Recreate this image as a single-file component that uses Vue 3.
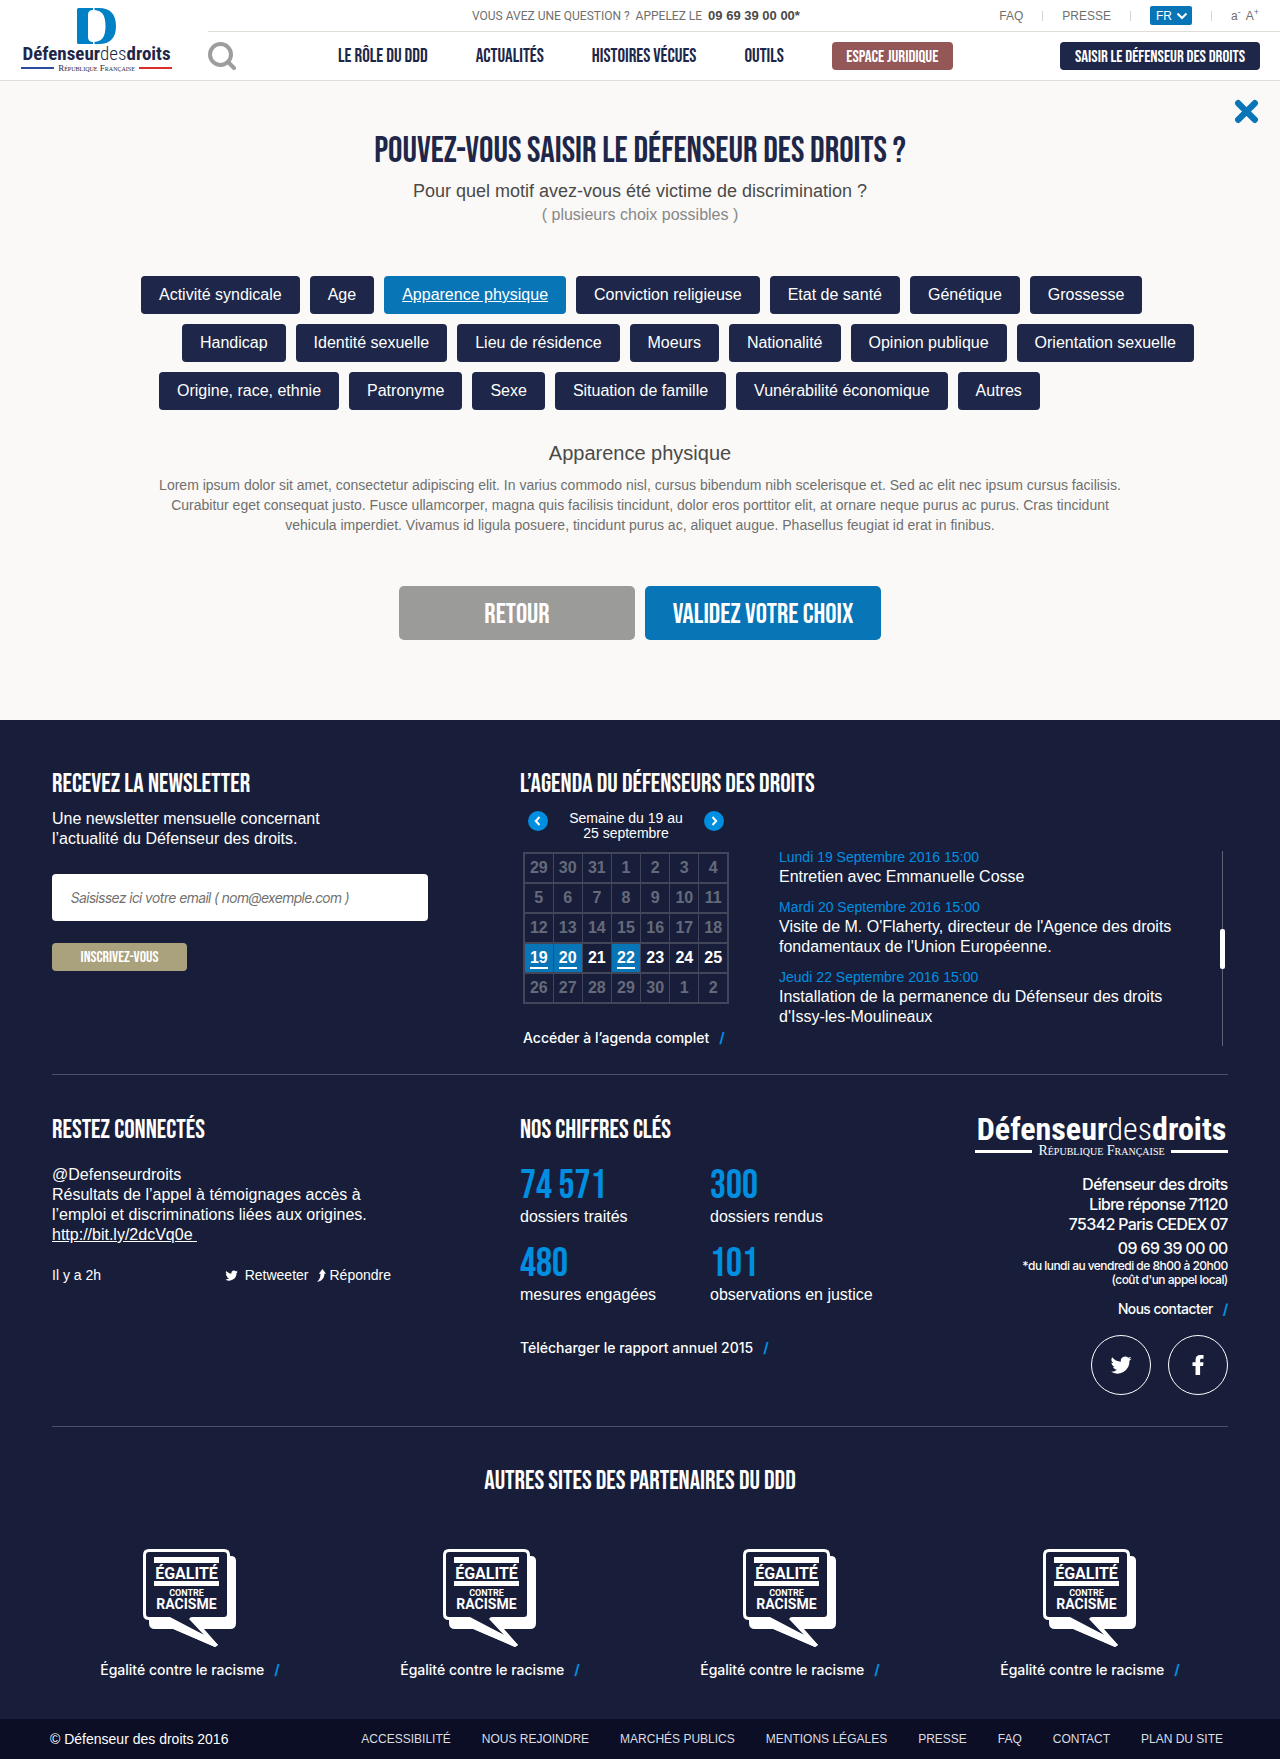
<script setup>
import { ref } from 'vue'

const menu = ['Le rôle du DDD', 'Actualités', 'Histoires vécues', 'Outils']

const reasonRows = [
  ['Activité syndicale', 'Age', 'Apparence physique', 'Conviction religieuse', 'Etat de santé', 'Génétique', 'Grossesse'],
  ['Handicap', 'Identité sexuelle', 'Lieu de résidence', 'Moeurs', 'Nationalité', 'Opinion publique', 'Orientation sexuelle'],
  ['Origine, race, ethnie', 'Patronyme', 'Sexe', 'Situation de famille', 'Vunérabilité économique', 'Autres'],
]
const selected = ref('Apparence physique')
const language = ref('FR')
const email = ref('')

const weeks = [
  [29, 30, 31, 1, 2, 3, 4],
  [5, 6, 7, 8, 9, 10, 11],
  [12, 13, 14, 15, 16, 17, 18],
  [19, 20, 21, 22, 23, 24, 25],
  [26, 27, 28, 29, 30, 1, 2],
]
const currentWeek = 3
const eventDays = [19, 20, 22]

const events = [
  { date: 'Lundi 19 Septembre 2016 15:00', lines: ['Entretien avec Emmanuelle Cosse'] },
  { date: 'Mardi 20 Septembre 2016 15:00', lines: ["Visite de M. O'Flaherty, directeur de l'Agence des droits", "fondamentaux de l'Union Européenne."] },
  { date: 'Jeudi 22 Septembre 2016 15:00', lines: ['Installation de la permanence du Défenseur des droits', "d'Issy-les-Moulineaux"] },
]

const figures = [
  { value: '74 571', label: 'dossiers traités' },
  { value: '300', label: 'dossiers rendus' },
  { value: '480', label: 'mesures engagées' },
  { value: '101', label: 'observations en justice' },
]

const legal = ['Accessibilité', 'Nous rejoindre', 'Marchés publics', 'Mentions légales', 'Presse', 'FAQ', 'Contact', 'Plan du site']

const bird = 'M23.6 4.9c-.8.4-1.7.6-2.7.8 1-.6 1.700-1.500 2-2.600-.9.500-1.900.900-3 1.100a4.700 4.700 0 0 0-8 4.300C8 8.300 4.600 6.400 2.300 3.600a4.700 4.700 0 0 0 1.400 6.200c-.7 0-1.500-.200-2.100-.600 0 2.300 1.600 4.200 3.800 4.700-.7.200-1.400.200-2.100.100.600 1.800 2.300 3.200 4.400 3.200A9.500 9.500 0 0 1 .700 19.200a13.300 13.300 0 0 0 20.500-11.800c.9-.7 1.700-1.500 2.400-2.500z'
</script>

<template>
  <div class="page">
    <header class="header">
      <a class="brand" href="#" aria-label="Défenseur des droits">
        <svg class="brand-mark" viewBox="0 0 39 36" aria-hidden="true">
          <path d="M0 1.500Q0 0 1.500 0H16V2Q11 2 11 7V29Q11 34 16 34V36H1.500Q0 36 0 34.500Z" />
          <path d="M17.500 0H22C33 0 39 6 39 18S33 36 22 36H17.500V34C25 33.500 28.500 29 28.500 18S25 2.500 17.500 2Z" />
        </svg>
        <span class="wordmark">Défenseur<i>des</i>droits</span>
        <span class="republic"><span>République Française</span></span>
      </a>

      <div class="header-body">
        <div class="topbar">
          <p class="question">VOUS AVEZ UNE QUESTION ?&nbsp; APPELEZ LE &nbsp;<b>09 69 39 00 00*</b></p>
          <div class="tools">
            <a href="#">FAQ</a>
            <a href="#">PRESSE</a>
            <div class="language">
              <select v-model="language" aria-label="Langue">
                <option>FR</option>
                <option>EN</option>
              </select>
              <svg viewBox="0 0 12 8" aria-hidden="true"><path d="M1.500 1.500 6 6l4.500-4.500" /></svg>
            </div>
            <div class="sizes">
              <button type="button" aria-label="Réduire le texte">a<sup>-</sup></button>
              <button type="button" aria-label="Agrandir le texte">A<sup>+</sup></button>
            </div>
          </div>
        </div>

        <div class="mainbar">
          <button class="search" type="button" aria-label="Rechercher">
            <svg viewBox="0 0 28 28"><circle cx="12.500" cy="12.500" r="10.500" /><path d="m20 20 6 6" /></svg>
          </button>
          <nav class="menu">
            <a v-for="item in menu" :key="item" href="#">{{ item }}</a>
            <a class="pill legal-space" href="#">Espace juridique</a>
          </nav>
          <a class="pill seize" href="#">Saisir le défenseur des droits</a>
        </div>
      </div>
    </header>

    <main class="main">
      <button class="close" type="button" aria-label="Fermer">
        <svg viewBox="0 0 24 24"><path d="M4 4l16 16M20 4 4 20" /></svg>
      </button>
      <h1>Pouvez-vous saisir le défenseur des droits ?</h1>
      <p class="lead">Pour quel motif avez-vous été victime de discrimination ?</p>
      <p class="hint">( plusieurs choix possibles )</p>

      <div class="reasons">
        <div v-for="(row, index) in reasonRows" :key="index" class="reason-row">
          <button
            v-for="reason in row"
            :key="reason"
            type="button"
            class="reason"
            :class="{ active: reason === selected }"
            :aria-pressed="reason === selected"
            @click="selected = reason"
          >{{ reason }}</button>
        </div>
      </div>

      <h2 class="reason-title">{{ selected }}</h2>
      <p class="description">
        Lorem ipsum dolor sit amet, consectetur adipiscing elit. In varius commodo nisl, cursus bibendum nibh scelerisque et. Sed ac elit nec ipsum cursus facilisis.<br>
        Curabitur eget consequat justo. Fusce ullamcorper, magna quis facilisis tincidunt, dolor eros porttitor elit, at ornare neque purus ac purus. Cras tincidunt<br>
        vehicula imperdiet. Vivamus id ligula posuere, tincidunt purus ac, aliquet augue. Phasellus feugiat id erat in finibus.
      </p>

      <div class="actions">
        <button type="button" class="back">Retour</button>
        <button type="button" class="confirm">Validez votre choix</button>
      </div>
    </main>

    <footer class="footer">
      <div class="band band-news">
        <section class="newsletter">
          <h2>Recevez la newsletter</h2>
          <p>Une newsletter mensuelle concernant<br>l’actualité du Défenseur des droits.</p>
          <form @submit.prevent>
            <input v-model="email" type="email" aria-label="Votre email" placeholder="Saisissez ici votre email ( nom@exemple.com )">
            <button type="submit">Inscrivez-vous</button>
          </form>
        </section>

        <section class="agenda">
          <h2>L’agenda du défenseurs des droits</h2>
          <div class="agenda-body">
            <div class="calendar">
              <div class="week-picker">
                <button type="button" aria-label="Semaine précédente"><svg viewBox="0 0 20 20"><path d="M11.500 6 7.800 10l3.700 4" /></svg></button>
                <span>Semaine du 19 au<br>25 septembre</span>
                <button type="button" aria-label="Semaine suivante"><svg viewBox="0 0 20 20"><path d="m8.500 6 3.700 4-3.700 4" /></svg></button>
              </div>
              <table>
                <tbody>
                  <tr v-for="(week, w) in weeks" :key="w" :class="{ current: w === currentWeek }">
                    <td v-for="day in week" :key="day" :class="{ event: w === currentWeek && eventDays.includes(day) }">
                      <span>{{ day }}</span>
                    </td>
                  </tr>
                </tbody>
              </table>
              <a class="more" href="#">Accéder à l’agenda complet</a>
            </div>
            <div class="events">
              <ul>
                <li v-for="event in events" :key="event.date">
                  <span class="date">{{ event.date }}</span>
                  <span v-for="line in event.lines" :key="line" class="line">{{ line }}</span>
                </li>
              </ul>
              <div class="scrollbar" aria-hidden="true"><i></i></div>
            </div>
          </div>
        </section>
      </div>

      <div class="band band-info">
        <section class="social-feed">
          <h2>Restez connectés</h2>
          <p>@Defenseurdroits<br>Résultats de l’appel à témoignages accès à<br>l’emploi et discriminations liées aux origines.<br><a href="#">http://bit.ly/2dcVq0e&nbsp;</a></p>
          <div class="tweet-meta">
            <span>Il y a 2h</span>
            <div class="tweet-actions">
              <a href="#"><svg class="bird" viewBox="0 0 24 24" aria-hidden="true"><path :d="bird" /></svg>Retweeter</a>
              <a href="#"><svg class="reply" viewBox="0 0 9 13" aria-hidden="true"><path d="M5.500 0 9 4.800H7.300C7.500 9 4.800 12 0 13c2.400-2 3.500-4.500 3.500-8.200H1.800Z" /></svg>Répondre</a>
            </div>
          </div>
        </section>

        <section class="figures">
          <h2>Nos chiffres clés</h2>
          <dl>
            <div v-for="figure in figures" :key="figure.label">
              <dt>{{ figure.label }}</dt>
              <dd>{{ figure.value }}</dd>
            </div>
          </dl>
          <a class="more" href="#">Télécharger le rapport annuel 2015</a>
        </section>

        <section class="contact">
          <div class="brand-large">
            <span class="wordmark">Défenseur<i>des</i>droits</span>
            <span class="republic"><span>République Française</span></span>
          </div>
          <address>Défenseur des droits<br>Libre réponse 71120<br>75342 Paris CEDEX 07</address>
          <p class="phone">09 69 39 00 00</p>
          <p class="hours">*du lundi au vendredi de 8h00 à 20h00<br>(coût d'un appel local)</p>
          <a class="more" href="#">Nous contacter</a>
          <div class="networks">
            <a href="#" aria-label="Twitter"><svg viewBox="0 0 24 24"><path :d="bird" /></svg></a>
            <a href="#" aria-label="Facebook"><svg viewBox="0 0 24 24"><path d="M9.300 23V13.200H6V9h3.300V6.200C9.300 3 11.300 1 14.500 1H18v4.200h-2.200c-1.200 0-1.500.600-1.500 1.600V9H18l-.5 4.200h-3.200V23z" /></svg></a>
          </div>
        </section>
      </div>

      <section class="partners">
        <h2>Autres sites des partenaires du DDD</h2>
        <ul>
          <li v-for="n in 4" :key="n">
            <svg viewBox="0 0 94 98" aria-hidden="true">
              <path class="shadow" d="M84 7h4q5 0 5 5v62q0 6-6 6H61L75 96 72 98 30 80H12q-6 0-6-6V68Z" />
              <path class="bubble" d="M6 1.500h75q4.500 0 4.500 4.500v59q0 4.500-4.500 4.500H6Q1.500 69.500 1.500 65V6Q1.500 1.500 6 1.500Z" />
              <path class="tail" d="M25 67h22l16 20Z" />
              <path class="shadow" d="m24 68 7 12 41 18 3-2-27-28-2 2 15 16Z" />
              <path class="shadow" d="M11 8h65v6H11zM11 32h65v5H11z" />
              <text class="big" x="43.500" y="30" text-anchor="middle">ÉGALITÉ</text>
              <text class="small" x="43.500" y="47" text-anchor="middle">CONTRE</text>
              <text class="mid" x="43.500" y="60" text-anchor="middle">RACISME</text>
            </svg>
            <a class="more" href="#">Égalité contre le racisme</a>
          </li>
        </ul>
      </section>

      <div class="bottom">
        <span>© Défenseur des droits 2016</span>
        <nav><a v-for="item in legal" :key="item" href="#">{{ item }}</a></nav>
      </div>
    </footer>
  </div>
</template>

<style>
body {
  margin: 0;
  background: #faf9f7;
}
</style>

<style scoped>
.page {
  --navy: #1e2749;
  --blue: #0875b7;
  --sky: #008fe0;
  --display: "Bebas Neue", Oswald, "Roboto Condensed", sans-serif;
  --text: "Liberation Sans", Arial, sans-serif;
  --tight: "Inter Tight", "Liberation Sans", Arial, sans-serif;
  font-family: var(--text);
  font-size: 16px;
  line-height: 20px;
  color: #575756;
}

*,
*::before,
*::after {
  box-sizing: border-box;
}

h1, h2, p, ul, dl, dd {
  margin: 0;
  padding: 0;
}

ul {
  list-style: none;
}

a {
  color: inherit;
  text-decoration: none;
}

button {
  font: inherit;
  color: inherit;
  margin: 0;
  padding: 0;
  border: 0;
  background: none;
  cursor: pointer;
}

svg {
  display: block;
}

/* header */
.header {
  display: flex;
  background: #fff;
  border-bottom: 1px solid #dfddd5;
}

.brand,
.brand-large {
  display: flex;
  flex-direction: column;
  align-items: center;
}

.brand {
  flex: none;
  width: 151px;
  margin: 8px 36px 0 21px;
  color: var(--navy);
}

.brand-mark {
  width: 39px;
  height: 36px;
  fill: #0081c6;
}

.wordmark {
  font-family: "Roboto Condensed", Roboto, sans-serif;
  font-weight: 700;
  font-size: 19px;
  line-height: 20px;
  white-space: nowrap;
}

.wordmark i {
  font-style: normal;
  font-weight: 300;
}

.republic {
  display: flex;
  align-items: center;
  gap: 4px;
  align-self: stretch;
  font-family: "Liberation Serif", serif;
  font-variant: small-caps;
  font-size: 9px;
  line-height: 8px;
  white-space: nowrap;
}

.republic::before,
.republic::after {
  content: "";
  flex: 1;
  height: 2px;
  background: #2b4c9b;
}

.republic::after {
  background: #dc2f2c;
}

.header-body {
  flex: 1;
  min-width: 0;
}

.topbar {
  display: flex;
  align-items: center;
  height: 32px;
  border-bottom: 1px solid #dfddd5;
  font-size: 12px;
  color: #6f6f6e;
}

.question {
  flex: 1;
  padding-left: 264px;
  font-family: Roboto, sans-serif;
  white-space: nowrap;
}

.question b {
  font-family: var(--text);
  font-size: 13px;
  color: #4a4a49;
}

.tools {
  display: flex;
  align-items: center;
  padding-right: 21px;
}

.tools > * + * {
  display: flex;
  align-items: center;
}

.tools > * + *::before {
  content: "";
  width: 1px;
  height: 10px;
  margin: 0 19px;
  background: #d6d4cc;
}

.language {
  position: relative;
}

.language select {
  appearance: none;
  width: 42px;
  height: 19px;
  padding: 0 0 0 6px;
  border: 0;
  border-radius: 2px;
  background: var(--blue);
  color: #fff;
  font: inherit;
}

.language svg {
  position: absolute;
  right: 4px;
  top: 6px;
  width: 12px;
  height: 8px;
  fill: none;
  stroke: #fff;
  stroke-width: 2;
  pointer-events: none;
}

.sizes button + button {
  margin-left: 5px;
}

.sizes sup {
  font-size: 9px;
  line-height: 0;
}

.mainbar {
  display: flex;
  align-items: center;
  height: 48px;
  padding-right: 20px;
  font-family: var(--display);
  font-size: 19px;
  text-transform: uppercase;
  white-space: nowrap;
  color: var(--navy);
}

.search svg {
  width: 28px;
  height: 28px;
  fill: none;
  stroke: #9d9d9c;
  stroke-width: 4;
  stroke-linecap: round;
}

.menu {
  flex: 1;
  display: flex;
  align-items: center;
  gap: 48px;
  margin-left: 102px;
}

.menu a {
  padding-top: 2px;
}

.pill {
  display: flex;
  align-items: center;
  justify-content: center;
  height: 28px;
  padding-top: 2px;
  border-radius: 4px;
  color: #fff;
  font-size: 17px;
}

.legal-space {
  width: 121px;
  background: #935757;
}

.seize {
  width: 200px;
  background: var(--navy);
}

/* main */
.main {
  position: relative;
  padding: 50px 40px 80px;
  text-align: center;
}

.close {
  position: absolute;
  top: 18px;
  right: 21px;
}

.close svg {
  width: 25px;
  height: 25px;
  stroke: var(--blue);
  stroke-width: 6;
  stroke-linecap: round;
}

h1 {
  padding-top: 2px;
  font-family: var(--display);
  font-weight: 400;
  font-size: 36px;
  line-height: 38px;
  text-transform: uppercase;
  color: var(--navy);
}

.lead {
  margin-top: 8px;
  font-size: 18px;
  line-height: 24px;
  color: #4a4a49;
}

.hint {
  line-height: 24px;
  color: #878787;
}

.reasons {
  display: flex;
  flex-direction: column;
  gap: 10px;
  width: max-content;
  margin: 49px auto 0;
  padding-left: 55px;
}

.reason-row {
  display: flex;
  gap: 10px;
}

.reason-row:nth-child(2) {
  padding-left: 41px;
}

.reason-row:nth-child(3) {
  padding-left: 18px;
}

.reason {
  height: 38px;
  padding: 0 18px;
  border-radius: 4px;
  background: var(--navy);
  color: #fff;
  white-space: nowrap;
}

.reason.active {
  background: var(--blue);
  text-decoration: underline;
}

.reason-title {
  margin-top: 31px;
  font-weight: 400;
  font-size: 20px;
  line-height: 24px;
  color: #4a4a49;
}

.description {
  margin-top: 10px;
  font-size: 14px;
  color: #6f6f6e;
}

.actions {
  display: flex;
  justify-content: center;
  gap: 10px;
  margin-top: 51px;
}

.actions button {
  width: 236px;
  height: 54px;
  padding-top: 3px;
  border-radius: 5px;
  background: var(--blue);
  color: #fff;
  font-family: var(--display);
  font-size: 28px;
  text-transform: uppercase;
}

.actions .back {
  background: #9b9b9a;
}

/* footer */
.footer {
  background: #181e39;
  color: #fff;
}

.footer h2 {
  padding-top: 2px;
  font-family: var(--display);
  font-weight: 400;
  font-size: 26px;
  line-height: 22px;
  text-transform: uppercase;
  white-space: nowrap;
}

.band {
  display: grid;
  margin: 0 52px;
  border-bottom: 1px solid #4b5064;
}

.band-news {
  grid-template-columns: 468fr 708fr;
  padding: 52px 0 26px;
}

.newsletter p {
  margin-top: 13px;
}

.newsletter form {
  display: flex;
  flex-direction: column;
  align-items: flex-start;
  gap: 22px;
  margin-top: 25px;
}

.newsletter input {
  width: 376px;
  height: 47px;
  padding: 0 19px;
  border: 0;
  border-radius: 4px;
  background: #fff;
  font-family: var(--tight);
  font-style: italic;
  font-size: 14px;
}

.newsletter input::placeholder {
  color: #6f6f6e;
  opacity: 1;
}

.newsletter form button {
  width: 135px;
  height: 28px;
  padding-top: 2px;
  border-radius: 4px;
  background: #aaa27d;
  font-family: var(--display);
  font-size: 16px;
  text-transform: uppercase;
}

.agenda-body {
  display: flex;
  align-items: flex-end;
  gap: 50px;
  margin-top: 15px;
}

.calendar {
  width: 206px;
  margin-left: 3px;
}

.week-picker {
  display: flex;
  justify-content: space-between;
  padding: 0 5px;
  font-size: 14px;
  line-height: 15px;
  text-align: center;
}

.week-picker button {
  width: 20px;
  height: 20px;
  border-radius: 50%;
  background: var(--sky);
}

.week-picker svg {
  fill: none;
  stroke: #fff;
  stroke-width: 2;
}

.calendar table {
  width: 206px;
  margin: 11px 0 24px;
  border-collapse: collapse;
  table-layout: fixed;
  border: 2px solid #41465b;
}

.calendar td {
  height: 30px;
  padding: 0;
  border: 1px solid #41465b;
  border-width: 2px 1px;
  font-weight: 700;
  text-align: center;
  color: #656a7b;
}

.calendar .current td {
  color: #fff;
}

.calendar .event {
  background: var(--blue);
}

.calendar .event span {
  display: inline-block;
  line-height: 18px;
  border-bottom: 2px solid #fff;
}

.more {
  display: inline-block;
  font-family: Inter, "Liberation Sans", Arial, sans-serif;
  font-weight: 500;
  font-size: 14px;
  white-space: nowrap;
}

.more::after {
  content: "/";
  margin-left: 10px;
  font-weight: 700;
  color: var(--sky);
}

.events {
  flex: 1;
  display: flex;
  justify-content: space-between;
  padding-right: 3px;
  height: 201px;
}

.events li + li {
  margin-top: 10px;
}

.events .date,
.events .line {
  display: block;
  white-space: nowrap;
}

.events .date {
  font-size: 14px;
  color: var(--sky);
}

.scrollbar {
  display: flex;
  align-items: center;
  justify-content: center;
  width: 5px;
  margin: 4px 0 2px;
  background: linear-gradient(#5d6274, #5d6274) center / 1px 100% no-repeat;
}

.scrollbar i {
  width: 5px;
  height: 40px;
  border-radius: 2px;
  background: #fff;
}

.band-info {
  grid-template-columns: 468fr 400fr 308fr;
  padding: 40px 0 31px;
}

.band-info h2 {
  margin-top: 3px;
}

.social-feed p {
  margin-top: 23px;
  white-space: nowrap;
}

.social-feed p a {
  text-decoration: underline;
}

.tweet-meta {
  display: flex;
  justify-content: space-between;
  width: 339px;
  margin-top: 20px;
  font-size: 14px;
}

.tweet-actions,
.tweet-actions a {
  display: flex;
  align-items: center;
}

.tweet-actions {
  gap: 8px;
}

.bird {
  width: 13px;
  height: 13px;
  margin-right: 7px;
  fill: #fff;
}

.reply {
  width: 9px;
  height: 13px;
  margin-right: 4px;
  fill: #fff;
}

.figures dl {
  display: grid;
  grid-template-columns: 190px 1fr;
  row-gap: 16px;
  margin: 23px 0 33px;
}

.figures dl div {
  display: flex;
  flex-direction: column-reverse;
  gap: 2px;
}

.figures dt {
  white-space: nowrap;
}

.figures dd {
  padding-top: 2px;
  font-family: var(--display);
  font-size: 40px;
  line-height: 38px;
  color: var(--sky);
}

.contact {
  display: flex;
  flex-direction: column;
  align-items: flex-end;
  text-align: right;
  font-family: var(--tight);
  font-weight: 500;
}

.contact .more {
  font-family: inherit;
}

.brand-large {
  width: 253px;
}

.brand-large .wordmark {
  font-size: 32px;
  line-height: 28px;
}

.brand-large .republic {
  gap: 6px;
  font-size: 14px;
  line-height: 16px;
}

.brand-large .republic::before,
.brand-large .republic::after {
  height: 3px;
  background: #fff;
}

.contact address {
  margin-top: 15px;
  font-style: normal;
}

.phone {
  margin-top: 4px;
}

.hours {
  margin: 1px 0 12px;
  font-size: 12px;
  line-height: 14px;
}

.networks {
  display: flex;
  gap: 17px;
  margin-top: 16px;
}

.networks a {
  display: grid;
  place-items: center;
  width: 60px;
  height: 60px;
  border: 1px solid #fff;
  border-radius: 50%;
}

.networks svg {
  width: 22px;
  height: 22px;
  fill: #fff;
}

.partners {
  padding: 42px 40px 39px;
  text-align: center;
}

.partners ul {
  display: grid;
  grid-template-columns: repeat(4, 1fr);
  margin-top: 56px;
}

.partners svg {
  width: 94px;
  height: 98px;
  margin: 0 auto 13px;
}

.shadow {
  fill: #fff;
}

.tail {
  fill: #181e39;
}

.bubble {
  fill: #181e39;
  stroke: #fff;
  stroke-width: 3;
  stroke-linejoin: round;
}

.partners text {
  fill: #fff;
  font-family: Roboto, sans-serif;
  font-weight: 700;
}

.big {
  font-size: 16px;
}

.mid {
  font-size: 14px;
}

.small {
  font-size: 9px;
}

.bottom {
  display: flex;
  align-items: center;
  justify-content: space-between;
  height: 40px;
  padding: 0 57px 0 50px;
  background: #0b0e24;
  font-size: 14px;
}

.bottom nav {
  display: flex;
  gap: 31px;
  font-size: 12px;
  text-transform: uppercase;
  color: #dcdde2;
}
</style>
